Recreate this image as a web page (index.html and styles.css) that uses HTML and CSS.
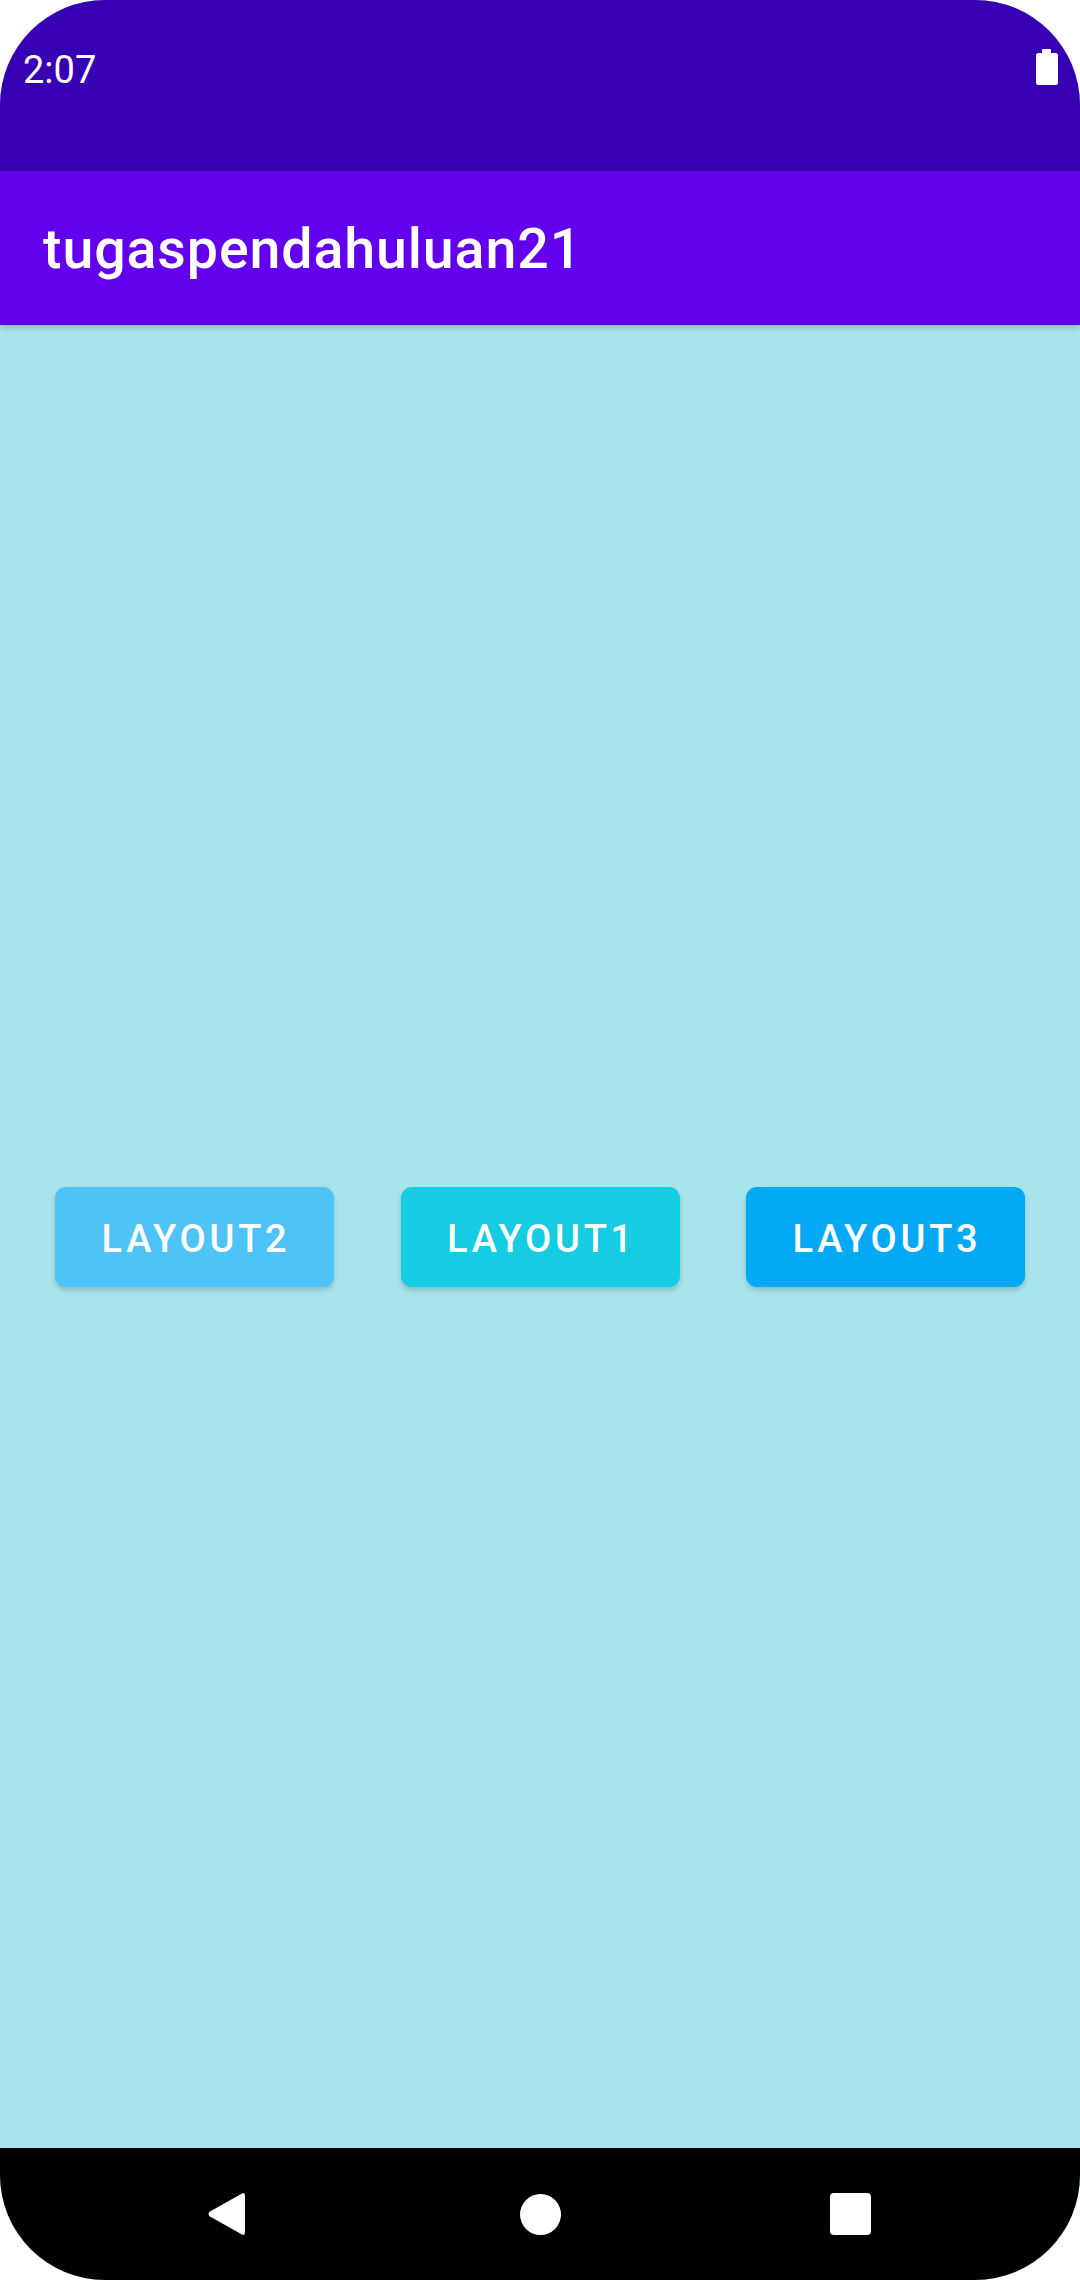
FILE: index.html
```html
<!DOCTYPE html>
<html>
<head>
<meta charset="utf-8">
<link rel="stylesheet" href="styles.css">
</head>
<body>
<div class="screen">
  <div class="status-bar">
    <span class="time">2:07</span>
    <svg class="battery" width="22" height="36" viewBox="0 0 22 36">
      <rect x="6" y="0" width="9" height="5" rx="1" fill="#fff"/>
      <rect x="0" y="4" width="22" height="32" rx="2.5" fill="#fff"/>
    </svg>
  </div>
  <div class="app-bar">
    <h1 class="title">tugaspendahuluan21</h1>
  </div>
  <main class="content">
    <div class="button-row">
      <button class="btn btn-light">LAYOUT2</button>
      <button class="btn btn-cyan">LAYOUT1</button>
      <button class="btn btn-blue">LAYOUT3</button>
    </div>
  </main>
  <nav class="nav-bar">
    <svg class="nav-back" width="38" height="44" viewBox="0 0 38 44">
      <path d="M35 1.5 Q38 0 38 4 L38 40 Q38 44 35 42.5 L3 24.5 Q0 22 3 19.5 Z" fill="#fff"/>
    </svg>
    <span class="nav-home"></span>
    <span class="nav-recents"></span>
  </nav>
</div>
</body>
</html>
```

FILE: styles.css
```css
html, body {
  margin: 0;
  padding: 0;
  background: #ffffff;
}

.screen {
  width: 1080px;
  height: 2280px;
  border-radius: 105px;
  overflow: hidden;
  display: flex;
  flex-direction: column;
  background: #a8e4ec;
  font-family: Roboto, "Noto Sans", sans-serif;
}

.status-bar {
  height: 171px;
  box-sizing: border-box;
  background: #3700b3;
  display: flex;
  align-items: flex-start;
  justify-content: space-between;
  padding: 49px 22px 0 23px;
}

.time {
  color: #ffffff;
  font-size: 38px;
  line-height: 1;
  margin-top: 2px;
}

.battery {
  display: block;
}

.app-bar {
  height: 154px;
  box-sizing: border-box;
  background: #6200ee;
  padding: 51px 0 0 43px;
  box-shadow: 0 2px 6px rgba(0, 0, 0, 0.22);
  position: relative;
  z-index: 1;
}

.title {
  margin: 0;
  color: #ffffff;
  font-size: 55.5px;
  font-weight: 500;
  letter-spacing: 0.9px;
  line-height: 1;
}

.content {
  flex: 1;
  display: flex;
  align-items: center;
  background: #a8e4ec;
}

.button-row {
  width: 100%;
  box-sizing: border-box;
  padding: 0 55px;
  display: flex;
  justify-content: space-between;
}

.btn {
  width: 279px;
  height: 100px;
  border: none;
  border-radius: 11px;
  color: #ffffff;
  font-family: Roboto, "Noto Sans", sans-serif;
  font-size: 38px;
  font-weight: 500;
  letter-spacing: 3.8px;
  line-height: 1;
  padding: 5px 0 0 3px;
  box-shadow: 0 3px 5px rgba(0, 0, 0, 0.18);
}

.btn-light { background: #4fc3f7; }
.btn-cyan { background: #16cce3; }
.btn-blue { background: #03a9f4; }

.nav-bar {
  height: 132px;
  background: #000000;
  display: flex;
  align-items: center;
  padding-left: 207px;
}

.nav-back {
  display: block;
}

.nav-home {
  width: 41px;
  height: 41px;
  border-radius: 50%;
  background: #ffffff;
  margin-left: 275px;
}

.nav-recents {
  width: 41px;
  height: 42px;
  border-radius: 4px;
  background: #ffffff;
  margin-left: 269px;
}
```
